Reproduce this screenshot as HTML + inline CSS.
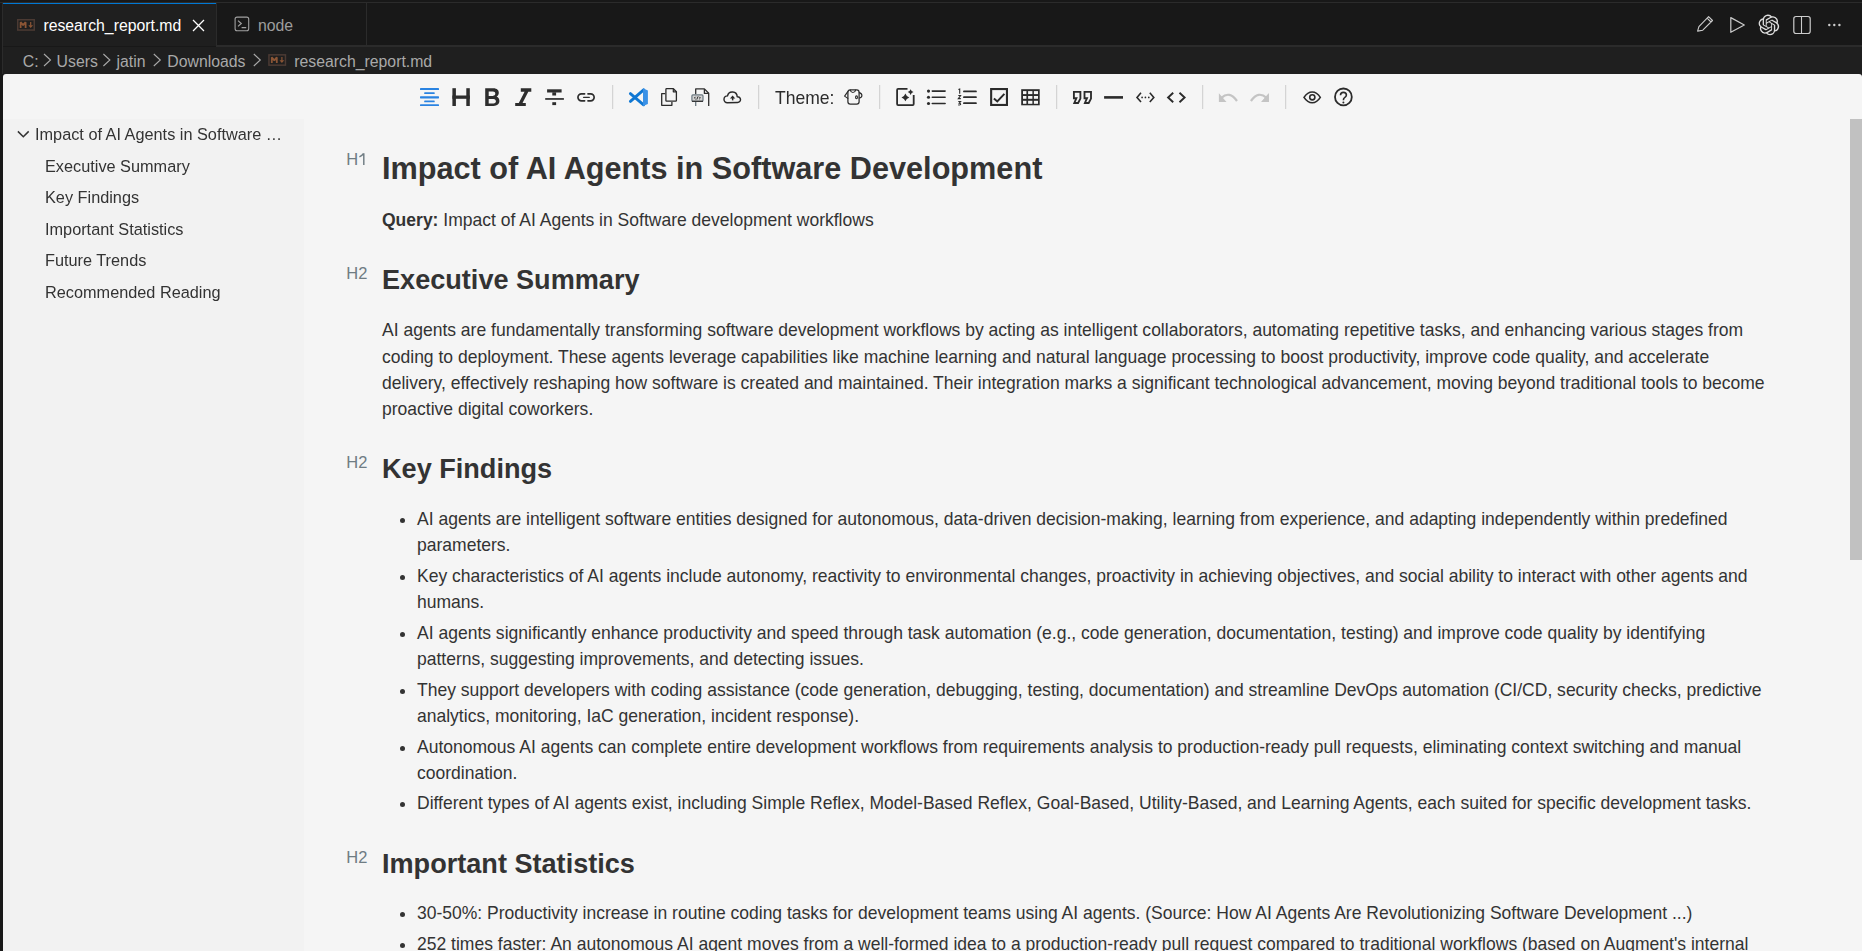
<!DOCTYPE html>
<html><head><meta charset="utf-8">
<style>
*{box-sizing:border-box;margin:0;padding:0}
html,body{width:1862px;height:951px;overflow:hidden;background:#181818;font-family:"Liberation Sans",sans-serif}
.abs{position:absolute}
/* ---- tabs ---- */
#tabline{left:0;top:2px;width:1862px;height:1px;background:#2b2b2b}
#vline{left:2px;top:2px;width:1px;height:72px;background:#2b2b2b}
#tab1{left:3px;top:3px;width:213px;height:43px;background:#1f1f1f;border-top:1px solid #0078d4}
#tab1r{left:216px;top:3px;width:1px;height:43px;background:#2b2b2b}
#tab2r{left:366px;top:3px;width:1px;height:43px;background:#2b2b2b}
#tabbot{left:216px;top:45px;width:1646px;height:2px;background:#2b2b2b}
.tabtxt{font-size:15.8px;white-space:nowrap;line-height:1}
#crumbs{left:3px;top:47px;width:1859px;height:27px;background:#1f1f1f}
.crumb{font-size:15.8px;color:#a9a9a9;white-space:nowrap;line-height:1}
/* ---- editor ---- */
#editor{left:3px;top:74px;width:1859px;height:877px;background:#f5f5f5;border-top-left-radius:3px;border-top-right-radius:3px;overflow:hidden}
#outline{left:0;top:45px;width:300.7px;height:832px;background:#f2f2f2}
#thumb{left:1847px;top:45px;width:12px;height:441px;background:#c1c1c1}
.ol{font-size:16.3px;color:#333;white-space:nowrap;line-height:1;will-change:transform}
.c{color:#333}
.mk{font-size:16.5px;color:#6f7c83;line-height:1;white-space:nowrap}
.h1{font-size:30.67px;font-weight:700;line-height:1;white-space:nowrap;color:#333}
.h2{font-size:27.1px;font-weight:700;line-height:1;white-space:nowrap;color:#333}
.p{font-size:17.53px;line-height:26.3px;color:#333;width:1389px}
ul.p{list-style:none}
ul.p li{position:relative;padding-left:35px}
ul.p li+li{margin-top:4.4px}
ul.p li:before{content:"";position:absolute;left:18px;top:12px;width:5px;height:5px;border-radius:50%;background:#333}
svg{display:block}
.ic{position:absolute}
</style></head><body>
<div class="abs" id="tabline"></div>
<div class="abs" id="vline"></div>
<div class="abs" id="tab1"></div>
<div class="abs" id="tab1r"></div>
<div class="abs" id="tab2r"></div>
<div class="abs" id="tabbot"></div>
<!-- tab1 contents -->

<div class="abs tabtxt" style="left:43.4px;top:18px;color:#fff">research_report.md</div>
<svg class="ic" style="left:192px;top:19px" width="13" height="13" viewBox="0 0 13 13"><path d="M1 1L12 12M12 1L1 12" stroke="#fff" stroke-width="1.3"/></svg>
<svg class="ic" style="left:234px;top:16px" width="16" height="16" viewBox="0 0 16 16"><rect x="1.1" y="1.1" width="13.6" height="13.6" rx="2" fill="none" stroke="#a0a0a0" stroke-width="1.1"/><path d="M4 4.6l3.3 2.9-3.3 2.9M7.6 11.6h4.6" fill="none" stroke="#a0a0a0" stroke-width="1.2"/></svg>
<div class="abs tabtxt" style="left:258px;top:18px;color:#9d9d9d">node</div>
<!-- top right icons -->

<!-- breadcrumbs -->
<div class="abs" id="crumbs"></div>
<div class="abs crumb" style="left:22.8px;top:54px">C:</div>
<div class="abs crumb" style="left:56.6px;top:54px">Users</div>
<div class="abs crumb" style="left:116.5px;top:54px">jatin</div>
<div class="abs crumb" style="left:167.3px;top:54px">Downloads</div>
<div class="abs crumb" style="left:294.3px;top:54px">research_report.md</div>

<div class="abs" id="editor">
  <div class="abs" id="outline"></div>
  <div class="abs" id="thumb"></div>
  <!-- outline -->
  <div class="abs ol" style="left:32.3px;top:52px">Impact of AI Agents in Software …</div>
  <div class="abs ol" style="left:42.1px;top:84px">Executive Summary</div>
  <div class="abs ol" style="left:42.1px;top:115px">Key Findings</div>
  <div class="abs ol" style="left:42.1px;top:146.5px">Important Statistics</div>
  <div class="abs ol" style="left:42.1px;top:178px">Future Trends</div>
  <div class="abs ol" style="left:42.1px;top:209.5px">Recommended Reading</div>

  <!-- content -->
  <div class="abs mk" style="left:343.3px;top:77px">H</div>
  <div class="abs h1" style="left:379px;top:78.8px">Impact of AI Agents in Software Development</div>
  <div class="abs p" style="left:379px;top:132.8px"><b>Query:</b> Impact of AI Agents in Software development workflows</div>

  <div class="abs mk" style="left:343.3px;top:190.9px">H2</div>
  <div class="abs h2" style="left:379px;top:192.3px">Executive Summary</div>
  <div class="abs p" style="left:379px;top:243.4px">AI agents are fundamentally transforming software development workflows by acting as intelligent collaborators, automating repetitive tasks, and enhancing various stages from coding to deployment. These agents leverage capabilities like machine learning and natural language processing to boost productivity, improve code quality, and accelerate delivery, effectively reshaping how software is created and maintained. Their integration marks a significant technological advancement, moving beyond traditional tools to become proactive digital coworkers.</div>

  <div class="abs mk" style="left:343.3px;top:380.2px">H2</div>
  <div class="abs h2" style="left:379px;top:380.9px">Key Findings</div>
  <ul class="abs p" style="left:379px;top:431.8px">
    <li>AI agents are intelligent software entities designed for autonomous, data-driven decision-making, learning from experience, and adapting independently within predefined parameters.</li>
    <li>Key characteristics of AI agents include autonomy, reactivity to environmental changes, proactivity in achieving objectives, and social ability to interact with other agents and humans.</li>
    <li>AI agents significantly enhance productivity and speed through task automation (e.g., code generation, documentation, testing) and improve code quality by identifying patterns, suggesting improvements, and detecting issues.</li>
    <li>They support developers with coding assistance (code generation, debugging, testing, documentation) and streamline DevOps automation (CI/CD, security checks, predictive analytics, monitoring, IaC generation, incident response).</li>
    <li>Autonomous AI agents can complete entire development workflows from requirements analysis to production-ready pull requests, eliminating context switching and manual coordination.</li>
    <li style="margin-top:3.4px">Different types of AI agents exist, including Simple Reflex, Model-Based Reflex, Goal-Based, Utility-Based, and Learning Agents, each suited for specific development tasks.</li>
  </ul>

  <div class="abs mk" style="left:343.3px;top:774.8px">H2</div>
  <div class="abs h2" style="left:379px;top:776.4px">Important Statistics</div>
  <ul class="abs p" style="left:379px;top:826.3px">
    <li>30-50%: Productivity increase in routine coding tasks for development teams using AI agents. (Source: How AI Agents Are Revolutionizing Software Development ...)</li>
    <li>252 times faster: An autonomous AI agent moves from a well-formed idea to a production-ready pull request compared to traditional workflows (based on Augment's internal testing and benchmarks).</li>
  </ul>

  </div>

<svg class="abs" style="left:0;top:0" width="1862" height="170" viewBox="0 0 1862 170">
 <!-- top right vscode icons -->
 <g fill="none" stroke="#cccccc" stroke-width="1.1" stroke-linejoin="round">
  <path d="M1697.6 31.1 L1698.9 26.6 L1708.6 16.6 L1712.5 20.5 L1702.8 30.2 Z M1707.1 18.1 L1711 22"/>
  <path d="M1730.8 17.6 V32.3 L1744.3 25 Z" stroke-width="1.2"/>
  <rect x="1793.8" y="16.5" width="16.4" height="17" rx="2.2" stroke-width="1.2"/>
  <path d="M1801.5 16.5 V33.5" stroke-width="1.1"/>
 </g>
 <g fill="#cccccc">
  <circle cx="1829.3" cy="25" r="1.2"/><circle cx="1834.3" cy="25" r="1.2"/><circle cx="1839.4" cy="25" r="1.2"/>
 </g>
 <path transform="translate(1758.6 14.6) scale(0.86)" fill="#dddddd" d="M22.2819 9.8211a5.9847 5.9847 0 0 0-.5157-4.9108 6.0462 6.0462 0 0 0-6.5098-2.9A6.0651 6.0651 0 0 0 4.9807 4.1818a5.9847 5.9847 0 0 0-3.9977 2.9 6.0462 6.0462 0 0 0 .7427 7.0966 5.98 5.98 0 0 0 .511 4.9107 6.051 6.051 0 0 0 6.5146 2.9001A5.9847 5.9847 0 0 0 13.2599 24a6.0557 6.0557 0 0 0 5.7718-4.2058 5.9894 5.9894 0 0 0 3.9977-2.9001 6.0557 6.0557 0 0 0-.7475-7.0729zm-9.022 12.6081a4.4755 4.4755 0 0 1-2.8764-1.0408l.1419-.0804 4.7783-2.7582a.7948.7948 0 0 0 .3927-.6813v-6.7369l2.02 1.1686a.071.071 0 0 1 .038.052v5.5826a4.504 4.504 0 0 1-4.4945 4.4944zm-9.6607-4.1254a4.4708 4.4708 0 0 1-.5346-3.0137l.142.0852 4.783 2.7582a.7712.7712 0 0 0 .7806 0l5.8428-3.3685v2.3324a.0804.0804 0 0 1-.0332.0615L9.74 19.9502a4.4992 4.4992 0 0 1-6.1408-1.6464zM2.3408 7.8956a4.485 4.485 0 0 1 2.3655-1.9728V11.6a.7664.7664 0 0 0 .3879.6765l5.8144 3.3543-2.0201 1.1685a.0757.0757 0 0 1-.071 0l-4.8303-2.7865A4.504 4.504 0 0 1 2.3408 7.872zm16.5963 3.8558L13.1038 8.364 15.1192 7.2a.0757.0757 0 0 1 .071 0l4.8303 2.7913a4.4944 4.4944 0 0 1-.6765 8.1042v-5.6772a.79.79 0 0 0-.407-.667zm2.0107-3.0231l-.142-.0852-4.7735-2.7818a.7759.7759 0 0 0-.7854 0L9.409 9.2297V6.8974a.0662.0662 0 0 1 .0284-.0615l4.8303-2.7866a4.4992 4.4992 0 0 1 6.6802 4.66zM8.3065 12.863l-2.02-1.1638a.0804.0804 0 0 1-.038-.0567V6.0742a4.4992 4.4992 0 0 1 7.3757-3.4537l-.142.0805L8.704 5.459a.7948.7948 0 0 0-.3927.6813zm1.0976-2.3654l2.602-1.4998 2.6069 1.4998v2.9994l-2.5974 1.4997-2.6067-1.4997Z"/>
 <path d="M17.9 131.4 L23.3 136.8 L28.7 131.4" fill="none" stroke="#333" stroke-width="1.5"/>

 <g id="md">
  <rect x="17.75" y="19.75" width="16.5" height="10.3" fill="none" stroke="#4b3a33" stroke-width="1.5"/>
  <path d="M20.6 28 V22.2 L23.1 25.2 L25.6 22.2 V28" fill="none" stroke="#8b5535" stroke-width="1.8" stroke-linejoin="bevel"/>
  <path d="M30.7 22 V25.8" stroke="#8b5535" stroke-width="1.2"/>
  <path d="M28.3 25.2 H33.1 L30.7 28 Z" fill="#8b5535"/>
 </g>
 <use href="#md" transform="translate(251.2 35.1)"/>
 <path d="M363.8 153.2 V165 M363.6 153.4 Q362.3 155.6 359.4 156.9" fill="none" stroke="#6f7c83" stroke-width="1.45"/>
 <!-- breadcrumb chevrons -->
 <g fill="none" stroke="#a9a9a9" stroke-width="1.1">
  <path d="M44 54 L50.5 60 L44 66"/>
  <path d="M103.4 54 L109.9 60 L103.4 66"/>
  <path d="M153.8 54 L160.3 60 L153.8 66"/>
  <path d="M253.8 54 L260.3 60 L253.8 66"/>
 </g>
 <g>
 </g>

 <!-- ===== toolbar ===== -->
 <g fill="#2a83e1">
  <rect x="420" y="88" width="19" height="2" rx="0.6"/>
  <rect x="424.2" y="92.2" width="10.5" height="1.9" rx="0.6"/>
  <rect x="420" y="96.3" width="19" height="2.1" rx="0.6"/>
  <rect x="424.2" y="100.4" width="10.5" height="1.9" rx="0.6"/>
  <rect x="420" y="104.3" width="19" height="1.8" rx="0.6"/>
 </g>
 <g fill="#2d2d2d">
  <rect x="452.4" y="88.2" width="3.5" height="17.8"/>
  <rect x="466.3" y="88.2" width="3.5" height="17.8"/>
  <rect x="452.4" y="95.5" width="17.4" height="3.3"/>
  <path fill-rule="evenodd" d="M485.2 88.2 H493.3 C497.3 88.2 498.8 90.4 498.8 92.7 C498.8 94.4 497.9 95.8 496.6 96.6 C498.4 97.3 499.4 99 499.4 101.1 C499.4 103.9 497.3 106 493.5 106 H485.2 Z M488.7 91.4 H492.9 C494.4 91.4 495.3 92.3 495.3 93.6 C495.3 94.9 494.4 95.9 492.9 95.9 H488.7 Z M488.7 99 H493.5 C495 99 495.9 100 495.9 101.3 C495.9 102.6 495 103.5 493.5 103.5 H488.7 Z"/>
  <path d="M520.8 88.2 H531.3 V91.7 H528.3 L522.5 103 H525.8 V106 H515.2 V103 H518.8 L524.6 91.7 H520.8 Z"/>
  <rect x="547.1" y="89.3" width="14.5" height="3.2"/>
  <rect x="552.3" y="92.3" width="3.8" height="3.2"/>
  <rect x="545.2" y="98.1" width="18.7" height="1.7"/>
  <rect x="552.3" y="102.2" width="3.8" height="2.9"/>
 </g>
 <g fill="none" stroke="#2d2d2d" stroke-width="1.7" stroke-linecap="round">
  <path d="M584.6 93.85 H581.45 A3.5 3.5 0 0 0 581.45 100.85 H584.6"/>
  <path d="M588 93.85 H590.65 A3.5 3.5 0 0 1 590.65 100.85 H588"/>
  <path d="M583.6 97.35 H589.3" stroke-width="1.4"/>
 </g>
 <g fill="#cdcdcd">
  <rect x="612.2" y="85" width="1" height="24"/>
  <rect x="758.2" y="85" width="1" height="24"/>
  <rect x="879.2" y="85" width="1" height="24"/>
  <rect x="1056.2" y="85" width="1" height="24"/>
  <rect x="1202.2" y="85" width="1" height="24"/>
  <rect x="1285.2" y="85" width="1" height="24"/>
 </g>
 <!-- vscode logo -->
 <g>
  <path d="M630.4 93.6 L643.6 104.8" stroke="#0f77d3" stroke-width="2.9" stroke-linecap="round"/>
  <path d="M630.4 101.4 L643.6 89.8" stroke="#0f77d3" stroke-width="2.9" stroke-linecap="round"/>
  <path d="M643 88.3 L647.9 90.6 V104 L643 106 Z" fill="#3a91e6"/>
 </g>
 <!-- copy -->
 <g fill="none" stroke="#2b2b2b" stroke-width="1.3" stroke-linejoin="round">
  <path d="M665.9 89.4 Q665.9 88.7 666.6 88.7 H673.4 L676.4 91.7 V100.5 Q676.4 101.2 675.7 101.2 H666.6 Q665.9 101.2 665.9 100.5 Z"/>
  <path d="M673.3 88.9 V91.8 H676.3" stroke-width="1.2"/>
  <path d="M665.2 93.6 H661.7 V105.3 H671.9 V101.9"/>
 </g>
 <!-- copy html -->
 <g fill="none" stroke-width="1.3" stroke-linejoin="round">
  <path d="M695.7 94.3 V88.9 H704.4 L708.7 93.2 V106" stroke="#2f2f2f"/>
  <path d="M704.4 88.9 V93.4 H708.7" stroke="#2f2f2f"/>
  <path d="M695.7 101.7 V106" stroke="#6b7880"/>
  <rect x="691.9" y="94.9" width="11.1" height="6.4" rx="1" fill="#d2d2d2" stroke="#6b7880" stroke-width="1.2"/>
  <path d="M692 101.3 H703" stroke="#2f2f2f" stroke-width="1.2"/>
  <path d="M695.6 96.8 L694.4 98 L695.6 99.2 M699.2 96.8 L700.4 98 L699.2 99.2 M698 96.5 L696.8 99.5" stroke="#2f2f2f" stroke-width="1"/>
 </g>
 <!-- cloud upload -->
 <g>
  <path d="M727.3 102.7 A3.4 3.4 0 1 1 727.5 95.9 A4.9 4.9 0 0 1 737.2 96.73 A2.9 2.9 0 1 1 737.6 102.5 Z" fill="none" stroke="#2a2a2a" stroke-width="1.45" stroke-linejoin="round"/>
  <path d="M729.9 98.4 L732.6 95.4 L735.3 98.4 Z" fill="#2a2a2a"/>
  <rect x="731.9" y="98" width="1.5" height="2.4" fill="#2a2a2a"/>
 </g>
 <text x="775" y="103.9" font-family="Liberation Sans" font-size="17.53" fill="#2b2b2b">Theme:</text>
 <!-- tshirt -->
 <g fill="none" stroke="#2b2b2b" stroke-width="1.25" stroke-linejoin="round" stroke-linecap="round">
  <rect x="847.9" y="89.9" width="11.2" height="14.3" rx="2.4"/>
  <path d="M850.3 90.1 Q850.9 92.5 852.9 92.5 Q855 92.5 855.6 90.1" stroke-width="1.15"/>
  <path d="M847.8 91.6 L844.6 96.1 L847.8 98.4" stroke-width="1.15"/>
  <path d="M859.2 92.6 Q861.9 93.4 861.9 95.6 Q861.9 97.7 859.3 98" stroke-width="1.15"/>
  <ellipse cx="856.5" cy="97.3" rx="0.95" ry="1.45" stroke-width="1.1"/>
 </g>
 <!-- sparkle box -->
 <g fill="none" stroke="#2b2b2b" stroke-width="1.8">
  <path d="M907.5 88.9 H898.1 Q897.1 88.9 897.1 89.9 V104.1 Q897.1 105.1 898.1 105.1 H912.7 Q913.7 105.1 913.7 104.1 V95.1" stroke-linejoin="round"/>
 </g>
 <g fill="#2b2b2b">
  <path d="M905.4 93.5 Q906.3 96.5 909.3 97.4 Q906.3 98.3 905.4 101.3 Q904.5 98.3 901.5 97.4 Q904.5 96.5 905.4 93.5 Z"/>
  <path d="M910.6 89.2 Q911.3 91.4 913.5 92.1 Q911.3 92.8 910.6 95 Q909.9 92.8 907.7 92.1 Q909.9 91.4 910.6 89.2 Z"/>
  <circle cx="928.5" cy="91.1" r="1.55"/><circle cx="928.5" cy="97.3" r="1.55"/><circle cx="928.5" cy="103.5" r="1.55"/>
 </g>
 <g fill="none" stroke="#2b2b2b" stroke-width="1.6" stroke-linecap="round">
  <path d="M932.3 91.1 H945.1 M932.3 97.3 H945.1 M932.3 103.5 H945.1"/>
  <path d="M963.9 91.4 H976 M963.9 97.2 H976 M963.9 103.2 H976" stroke-width="1.7"/>
 </g>
 <g fill="none" stroke="#2b2b2b" stroke-width="1.1">
  <path d="M958.4 89.6 L959.7 89.1 V93.8"/>
  <path d="M958.3 95.5 H960.6 L958.3 98.6 H960.8"/>
  <path d="M958.3 101.5 H960.6 L959.2 103.1 Q960.8 103.3 960.6 104.5 Q960 105.3 958.3 104.9"/>
 </g>
 <!-- checkbox -->
 <g fill="none" stroke="#2b2b2b" stroke-width="2.1">
  <rect x="991.15" y="89.05" width="15.8" height="15.9"/>
  <path d="M993.9 98.4 L997.3 101.4 L1004.4 93.9" stroke-width="2"/>
 </g>
 <!-- table -->
 <g>
  <rect x="1021.2" y="89.2" width="18.5" height="16.1" fill="#2b2b2b"/>
  <g fill="#f5f5f5">
   <rect x="1023" y="91.1" width="3.4" height="3"/><rect x="1028.1" y="91.1" width="4.3" height="3"/><rect x="1033.9" y="91.1" width="4.1" height="3"/>
   <rect x="1023" y="96" width="3.4" height="2.8"/><rect x="1028.1" y="96" width="4.3" height="2.8"/><rect x="1033.9" y="96" width="4.1" height="2.8"/>
   <rect x="1023" y="100.8" width="3.4" height="3"/><rect x="1028.1" y="100.8" width="4.3" height="3"/><rect x="1033.9" y="100.8" width="4.1" height="3"/>
  </g>
 </g>
 <!-- quote -->
 <g fill="none" stroke="#2b2b2b" stroke-width="1.85" stroke-linejoin="miter">
  <path d="M1073.9 98.2 V91.9 H1080.4 V98.6 L1078.1 103 H1074.3 L1076.4 98.2 Z"/>
  <path d="M1084.5 98.2 V91.9 H1091 V98.6 L1088.7 103 H1084.9 L1087 98.2 Z"/>
 </g>
 <!-- hr, code -->
 <rect x="1104.1" y="96.1" width="18.9" height="2.6" fill="#2b2b2b"/>
 <g fill="none" stroke="#2b2b2b" stroke-width="1.6">
  <path d="M1141 92.8 L1137 97.4 L1141 102"/>
  <path d="M1149.8 92.8 L1153.8 97.4 L1149.8 102"/>
  <path d="M1173.2 92.8 L1168.1 97.5 L1173.2 102.2 M1179.5 92.8 L1184.6 97.5 L1179.5 102.2" stroke-width="1.9"/>
 </g>
 <g fill="#2b2b2b"><circle cx="1142.1" cy="97.4" r="0.85"/><circle cx="1145.4" cy="97.4" r="0.85"/><circle cx="1148.8" cy="97.4" r="0.85"/></g>
 <!-- undo redo -->
 <g fill="#c4c4c4">
  <path d="M1218.9 93.2 L1226.5 101.9 H1218.9 Z"/>
  <path d="M1250.1 93.2 L1250.1 101.9 H1257.7 Z" transform="translate(2518.9 0) scale(-1 1)"/>
 </g>
 <g fill="none" stroke="#c4c4c4" stroke-width="2.2">
  <path d="M1221.4 97.9 Q1229.4 90.3 1237 101"/>
  <path d="M1266.5 97.9 Q1258.5 90.3 1250.9 101"/>
 </g>
 <g fill="#c4c4c4"><path d="M1268.9 93.2 V101.9 H1261.3 Z"/></g>
 <!-- eye help -->
 <g fill="none" stroke="#2b2b2b" stroke-width="1.6">
  <path d="M1304 97.4 C1306.5 93.6 1309 92 1312.2 92 C1315.4 92 1317.9 93.6 1320.3 97.4 C1317.9 101.2 1315.4 102.8 1312.2 102.8 C1309 102.8 1306.5 101.2 1304 97.4 Z"/>
  <circle cx="1312.3" cy="97.3" r="2.6"/>
  <circle cx="1343.4" cy="96.9" r="8.4" stroke-width="1.8"/>
  <path d="M1340.5 95.2 Q1340.5 92.4 1343.4 92.4 Q1346.4 92.4 1346.4 95.1 Q1346.4 96.6 1344.6 97.6 Q1343.4 98.3 1343.4 100.3" stroke-width="1.6"/>
 </g>
 <circle cx="1343.4" cy="102.5" r="1" fill="#2b2b2b"/>
</svg>

</body></html>
